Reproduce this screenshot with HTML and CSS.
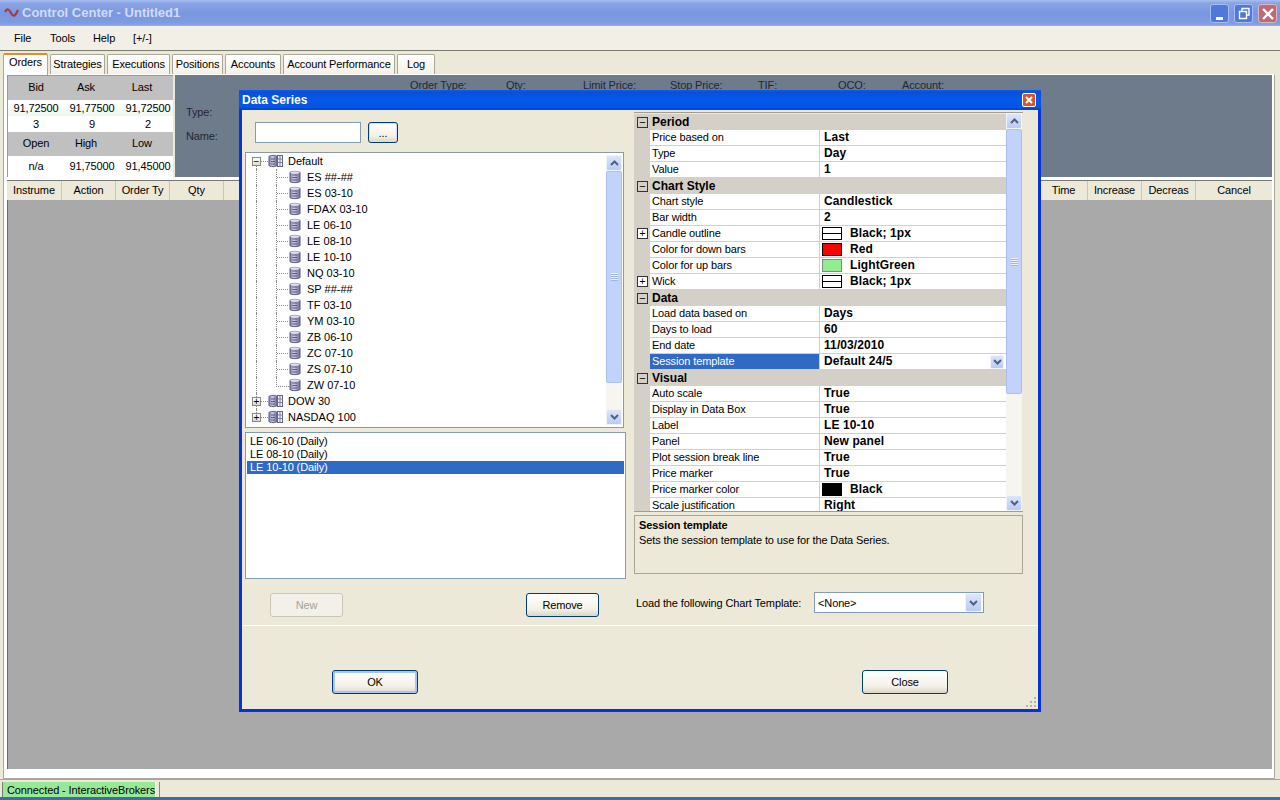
FILE: index.html
```html
<!DOCTYPE html>
<html lang="en">
<head>
<meta charset="utf-8">
<title>Control Center - Untitled1</title>
<link rel="stylesheet" href="styles.css">
</head>
<body>
<svg class="defs" width="0" height="0" aria-hidden="true">
  <defs>
    <linearGradient id="dbg" x1="0" x2="1" y1="0" y2="0"><stop offset="0" stop-color="#7676a8"/><stop offset=".4" stop-color="#cfcfe6"/><stop offset="1" stop-color="#6a6a9c"/></linearGradient>
    <symbol id="db" viewBox="0 0 12 14">
      <path d="M1 2.500C1 1 11 1 11 2.500V11.500C11 13 1 13 1 11.500Z" fill="url(#dbg)" stroke="#5c5c84"/>
      <path d="M3.500 5h5M3.500 7.500h5M3.500 10h5" stroke="#55557e"/>
      <ellipse cx="6" cy="2.500" rx="4.500" ry="1.200" fill="#dedeee"/>
    </symbol>
    <symbol id="dbs" viewBox="0 0 16 14">
      <path d="M1 2.500C1 1 9 1 9 2.500V11.500C9 13 1 13 1 11.500Z" fill="url(#dbg)" stroke="#5c5c84"/>
      <path d="M3 5h4M3 7.500h4M3 10h4" stroke="#55557e"/>
      <rect x="9.500" y="1.500" width="5" height="11" fill="#f4f4f8" stroke="#62627e"/>
      <path d="M9.500 5h5M9.500 8.500h5M12 1.500v11" stroke="#7c7c9a"/>
    </symbol>
    <symbol id="chev" viewBox="0 0 9 6"><path d="M1 5l3.500-3.500L8 5" fill="none" stroke="#4d6185" stroke-width="2"/></symbol>
  </defs>
</svg>
<div class="app">
  <header class="titlebar">
    <svg class="appicon" width="15" height="12" viewBox="0 0 15 12"><path d="M1 5c2-4 4-3 6 1s4 4 7-3" fill="none" stroke="#a83b3b" stroke-width="2.200"/></svg>
    <span class="apptitle">Control Center - Untitled1</span>
    <div class="winbtns">
      <span class="winbtn"><svg width="18" height="18" viewBox="0 0 18 18"><rect x="5" y="12" width="7" height="3" fill="#fff"/></svg></span>
      <span class="winbtn"><svg width="18" height="18" viewBox="0 0 18 18"><path d="M7 6V3.500h7V10h-2.500M4.500 6.500h7v7h-7z" fill="none" stroke="#fff" stroke-width="1.400"/></svg></span>
      <span class="winbtn winclose"><svg width="18" height="18" viewBox="0 0 18 18"><path d="M4 4l10 10M14 4L4 14" stroke="#fff" stroke-width="2.400"/></svg></span>
    </div>
  </header>
  <nav class="menubar"><span class="m1">File</span><span class="m2">Tools</span><span class="m3">Help</span><span>[+/-]</span></nav>
  <div class="tabs">
    <span class="tab active t1">Orders</span>
    <span class="tab t2">Strategies</span>
    <span class="tab t3">Executions</span>
    <span class="tab t4">Positions</span>
    <span class="tab t5">Accounts</span>
    <span class="tab t6">Account Performance</span>
    <span class="tab t7">Log</span>
  </div>
  <main class="panel">
    <section class="top">
      <div class="quote">
        <div class="qrow qhead"><span>Bid</span><span>Ask</span><span>Last</span></div>
        <div class="qrow qval qtint"><span>91,72500</span><span>91,77500</span><span>91,72500</span></div>
        <div class="qrow qval"><span>3</span><span>9</span><span>2</span></div>
        <div class="qrow qhead"><span>Open</span><span>High</span><span>Low</span></div>
        <div class="qrow qval qlast"><span>n/a</span><span>91,75000</span><span>91,45000</span></div>
      </div>
      <div class="slate">
        <div class="slabels"><span class="l1">Order Type:</span><span class="l2">Qty:</span><span class="l3">Limit Price:</span><span class="l4">Stop Price:</span><span class="l5">TIF:</span><span class="l6">OCO:</span><span>Account:</span></div>
        <div class="sfield first">Type:</div>
        <div class="sfield">Name:</div>
      </div>
    </section>
    <section class="grid">
      <div class="ghead">
        <span class="g1">Instrume</span><span class="g2">Action</span><span class="g3">Order Ty</span><span class="g4">Qty</span>
        <span class="gspace"></span>
        <span class="g5">Time</span><span class="g6">Increase</span><span class="g7">Decreas</span><span class="g8">Cancel</span>
      </div>
      <div class="gbody"></div>
    </section>
  </main>
  <footer class="status"><span class="conn">Connected - InteractiveBrokers</span><span class="srest"></span></footer>
  <div class="taskstrip"></div>

  <div class="dialog">
    <div class="dtitle"><span>Data Series</span><span class="dclose"><svg width="12" height="12" viewBox="0 0 12 12"><path d="M3 3l6 6M9 3l-6 6" stroke="#fff" stroke-width="2"/></svg></span></div>
    <div class="dmain">
      <div class="dleft">
        <div class="search"><span class="input"></span><span class="btn dots">...</span></div>
        <div class="tree">
          <div class="tnodes">
            <div class="node root"><span class="pm">−</span><svg class="ri"><use href="#dbs"/></svg>Default</div>
            <div class="node leaf"><svg class="li"><use href="#db"/></svg>ES ##-##</div>
            <div class="node leaf"><svg class="li"><use href="#db"/></svg>ES 03-10</div>
            <div class="node leaf"><svg class="li"><use href="#db"/></svg>FDAX 03-10</div>
            <div class="node leaf"><svg class="li"><use href="#db"/></svg>LE 06-10</div>
            <div class="node leaf"><svg class="li"><use href="#db"/></svg>LE 08-10</div>
            <div class="node leaf"><svg class="li"><use href="#db"/></svg>LE 10-10</div>
            <div class="node leaf"><svg class="li"><use href="#db"/></svg>NQ 03-10</div>
            <div class="node leaf"><svg class="li"><use href="#db"/></svg>SP ##-##</div>
            <div class="node leaf"><svg class="li"><use href="#db"/></svg>TF 03-10</div>
            <div class="node leaf"><svg class="li"><use href="#db"/></svg>YM 03-10</div>
            <div class="node leaf"><svg class="li"><use href="#db"/></svg>ZB 06-10</div>
            <div class="node leaf"><svg class="li"><use href="#db"/></svg>ZC 07-10</div>
            <div class="node leaf"><svg class="li"><use href="#db"/></svg>ZS 07-10</div>
            <div class="node leaf lastleaf"><svg class="li"><use href="#db"/></svg>ZW 07-10</div>
            <div class="node root"><span class="pm">+</span><svg class="ri"><use href="#dbs"/></svg>DOW 30</div>
            <div class="node root"><span class="pm">+</span><svg class="ri"><use href="#dbs"/></svg>NASDAQ 100</div>
          </div>
          <div class="scroll tscroll">
            <span class="sbtn"><svg width="9" height="6"><use href="#chev"/></svg></span>
            <span class="thumb tthumb"><i></i></span>
            <span class="track"></span>
            <span class="sbtn"><svg class="down" width="9" height="6"><use href="#chev"/></svg></span>
          </div>
        </div>
        <div class="list">
          <div>LE 06-10 (Daily)</div>
          <div>LE 08-10 (Daily)</div>
          <div class="sel">LE 10-10 (Daily)</div>
        </div>
        <div class="lbtns"><span class="btn new disabled">New</span><span class="btn new">Remove</span></div>
      </div>
      <div class="dright">
        <div class="props">
          <div class="prows">
            <div class="cat"><span class="ex">−</span>Period</div>
            <div class="pr"><span class="pg"></span><span class="pn">Price based on</span><span class="pv">Last</span></div>
            <div class="pr"><span class="pg"></span><span class="pn">Type</span><span class="pv">Day</span></div>
            <div class="pr"><span class="pg"></span><span class="pn">Value</span><span class="pv">1</span></div>
            <div class="cat"><span class="ex">−</span>Chart Style</div>
            <div class="pr"><span class="pg"></span><span class="pn">Chart style</span><span class="pv">Candlestick</span></div>
            <div class="pr"><span class="pg"></span><span class="pn">Bar width</span><span class="pv">2</span></div>
            <div class="pr"><span class="pg"><span class="ex">+</span></span><span class="pn">Candle outline</span><span class="pv"><i class="sw swline"></i>Black; 1px</span></div>
            <div class="pr"><span class="pg"></span><span class="pn">Color for down bars</span><span class="pv"><i class="sw swred"></i>Red</span></div>
            <div class="pr"><span class="pg"></span><span class="pn">Color for up bars</span><span class="pv"><i class="sw swgreen"></i>LightGreen</span></div>
            <div class="pr"><span class="pg"><span class="ex">+</span></span><span class="pn">Wick</span><span class="pv"><i class="sw swline"></i>Black; 1px</span></div>
            <div class="cat"><span class="ex">−</span>Data</div>
            <div class="pr"><span class="pg"></span><span class="pn">Load data based on</span><span class="pv">Days</span></div>
            <div class="pr"><span class="pg"></span><span class="pn">Days to load</span><span class="pv">60</span></div>
            <div class="pr"><span class="pg"></span><span class="pn">End date</span><span class="pv">11/03/2010</span></div>
            <div class="pr"><span class="pg"></span><span class="pn psel">Session template</span><span class="pv">Default 24/5<span class="dd small"><svg class="down" width="9" height="6"><use href="#chev"/></svg></span></span></div>
            <div class="cat"><span class="ex">−</span>Visual</div>
            <div class="pr"><span class="pg"></span><span class="pn">Auto scale</span><span class="pv">True</span></div>
            <div class="pr"><span class="pg"></span><span class="pn">Display in Data Box</span><span class="pv">True</span></div>
            <div class="pr"><span class="pg"></span><span class="pn">Label</span><span class="pv">LE 10-10</span></div>
            <div class="pr"><span class="pg"></span><span class="pn">Panel</span><span class="pv">New panel</span></div>
            <div class="pr"><span class="pg"></span><span class="pn">Plot session break line</span><span class="pv">True</span></div>
            <div class="pr"><span class="pg"></span><span class="pn">Price marker</span><span class="pv">True</span></div>
            <div class="pr"><span class="pg"></span><span class="pn">Price marker color</span><span class="pv"><i class="sw swblack"></i>Black</span></div>
            <div class="pr"><span class="pg"></span><span class="pn">Scale justification</span><span class="pv">Right</span></div>
          </div>
          <div class="scroll pscroll">
            <span class="sbtn"><svg width="9" height="6"><use href="#chev"/></svg></span>
            <span class="thumb pthumb"><i></i></span>
            <span class="track"></span>
            <span class="sbtn"><svg class="down" width="9" height="6"><use href="#chev"/></svg></span>
          </div>
        </div>
        <div class="help"><b>Session template</b><span>Sets the session template to use for the Data Series.</span></div>
        <div class="template">
          <span class="tlabel">Load the following Chart Template:</span>
          <span class="select"><span>&lt;None&gt;</span><span class="dd"><svg class="down" width="9" height="6"><use href="#chev"/></svg></span></span>
        </div>
      </div>
    </div>
    <div class="dfoot"><span class="btn act def">OK</span><span class="btn act">Close</span>
      <svg class="grip" width="12" height="12" viewBox="0 0 12 12"><path d="M9 1h2v2H9zM5 5h2v2H5zM9 5h2v2H9zM1 9h2v2H1zM5 9h2v2H5zM9 9h2v2H9z" fill="#b7b49f"/></svg>
    </div>
  </div>
</div>
</body>
</html>
```
FILE: styles.css
```css
* { box-sizing: border-box; }
html, body { margin: 0; padding: 0; }
body { width: 1280px; height: 800px; overflow: hidden; font: 11px/16px "Liberation Sans", Arial, sans-serif; letter-spacing: -.12px; color: #000; background: #ece9d8; }
.defs { position: absolute; }
svg { display: block; }
.down { transform: scaleY(-1); }
.app { position: relative; width: 1280px; height: 800px; display: flex; flex-direction: column; }

.titlebar { height: 26px; display: flex; align-items: center; padding: 0 3px 0 4px; background: linear-gradient(#a9bff0 0, #8aa4e6 3px, #7a96df 14px, #7f9ce2 23px, #93ade9 26px); }
.appicon { margin-right: 3px; }
.apptitle { font: bold 13px/20px "Liberation Sans", sans-serif; letter-spacing: 0; color: #d0dcf6; }
.winbtns { margin-left: auto; display: flex; gap: 5px; }
.winbtn { width: 19px; height: 19px; border: 1px solid #a8bdf0; border-radius: 3px; background: #4f78da; }
.winclose { background: #bd6a72; border-color: #d8b8c4; }

.menubar { height: 25px; display: flex; align-items: center; background: #f2efe7; border-bottom: 1px solid #7c7b70; padding-left: 14px; flex: none; }
.m1 { width: 36px; } .m2 { width: 43px; } .m3 { width: 40px; }

.tabs { height: 23px; display: flex; align-items: flex-end; padding-left: 3px; background: #ece9d8; gap: 2px; position: relative; z-index: 1; flex: none; }
.tab { height: 20px; line-height: 19px; text-align: center; background: linear-gradient(#fff, #f3f1e7); border: 1px solid #a9a797; border-bottom: 0; border-radius: 2px 2px 0 0; }
.active { height: 22px; margin-bottom: -1px; background: #fff; border-top: 2px solid #e68b2c; line-height: 15px; }
.t1 { width: 45px; } .t2 { width: 55px; } .t3 { width: 63px; } .t4 { width: 51px; }
.t5 { width: 56px; } .t6 { width: 112px; } .t7 { width: 38px; }

.panel { width: 1272px; margin-left: 3px; height: 705px; border: 1px solid #a9a797; border-top-color: #fff; background: #fff; padding: 0 2px 0 3px; display: flex; flex-direction: column; flex: none; }
.top { height: 102px; display: flex; gap: 2px; background: #ece9d8; flex: none; }
.quote { width: 166px; background: #fff; border: 1px solid #999; border-width: 1px 0 0 1px; flex: none; }
.qrow { display: grid; grid-template-columns: 56px 56px 52px; text-align: center; height: 16px; line-height: 16px; }
.qhead { height: 24px; line-height: 23px; background: #c0c0c0; }
.qhead span + span { padding-right: 12px; }
.qhead span + span + span { padding-right: 8px; }
.qval span + span + span { padding-left: 4px; white-space: nowrap; }
.qtint { background: linear-gradient(#fff, #eef8ee); }
.qlast { height: 21px; line-height: 20px; }
.slate { flex: 1; background: #6d7b8b; color: #1f2733; overflow: hidden; }
.slabels { display: flex; padding: 2px 0 0 235px; height: 19px; }
.l1 { width: 96px; } .l2 { width: 77px; } .l3 { width: 87px; } .l4 { width: 88px; } .l5 { width: 80px; } .l6 { width: 64px; }
.sfield { padding-left: 11px; height: 24px; line-height: 24px; }
.first { margin-top: 6px; }

.grid { flex: 1; margin-top: 3px; display: flex; flex-direction: column; background: #fff; }
.ghead { height: 20px; display: flex; background: #ece9d8; border-top: 1px solid #777; line-height: 18px; flex: none; }
.ghead span { text-align: center; border-right: 1px solid #c9c6b4; }
.g1 { width: 55px; } .g2 { width: 54px; } .g3 { width: 54px; } .g4 { width: 54px; }
.ghead .gspace { flex: 1; border: 0; }
.g5 { width: 48px; } .g6 { width: 54px; } .g7 { width: 54px; } .g8 { width: 76px; }
.ghead .g8 { border-right: 0; }
.gbody { height: 569px; background: #a9a9a9; border-left: 1px solid #6c6c64; flex: none; }

.status { height: 18px; display: flex; padding: 2px 0 0 2px; gap: 3px; background: #ece9d8; border-top: 1px solid #a9a797; flex: none; }
.conn { width: 154px; height: 15px; line-height: 16px; padding-left: 4px; background: #98e898; border-left: 1px solid #7c7b70; border-right: 1px solid #fff; white-space: nowrap; }
.srest { flex: 1; border-left: 1px solid #8a8876; margin-right: 2px; }
.taskstrip { height: 3px; flex: none; background: #3a6ea5; }

.dialog { position: absolute; left: 239px; top: 90px; width: 802px; height: 622px; border: 3px solid #0831d9; border-top: 0; background: #ece9d8; display: flex; flex-direction: column; }
.dtitle { height: 20px; margin: 0 -3px; padding: 0 5px 0 3px; display: flex; align-items: center; justify-content: space-between; color: #fff; font: bold 12px/21px "Liberation Sans", sans-serif; letter-spacing: 0; background: linear-gradient(#0a5fe8 0, #0a4fd8 2px, #0658ea 9px, #0255e6 17px, #0440c0 20px); flex: none; }
.dclose { width: 14px; height: 14px; border: 1px solid #fff; border-radius: 2px; background: #d3582f; }
.dmain { height: 516px; display: flex; border-bottom: 1px solid #fff; flex: none; }
.dleft { width: 392px; padding-left: 3px; flex: none; }
.search { display: flex; gap: 7px; margin: 12px 0 0 10px; height: 21px; }
.input { width: 106px; height: 21px; background: #fff; border: 1px solid #7f9db9; }
.btn { display: block; text-align: center; background: linear-gradient(#fff, #f3f1e7 70%, #d9d6c7); border: 1px solid #003c74; border-radius: 3px; }
.dots { width: 30px; height: 21px; line-height: 20px; box-shadow: inset 0 0 0 1px #cfe0f6; }

.tree { width: 379px; height: 276px; margin-top: 9px; display: flex; background: #fff; border: 1px solid #8a9aa8; overflow: hidden; }
.tnodes { flex: 1; }
.node { height: 16px; line-height: 16px; display: flex; align-items: center; position: relative; white-space: nowrap; letter-spacing: 0; }
.root { padding-left: 6px; }
.root::before { content: ""; position: absolute; left: 15px; top: 8px; width: 7px; border-top: 1px dotted #8a8a8a; }
.root::after { content: ""; position: absolute; left: 10px; top: 0; height: 16px; border-left: 1px dotted #8a8a8a; }
.root:first-child::after { top: 8px; height: 8px; }
.root:last-child::after { height: 8px; }
.leaf { padding-left: 43px; }
.leaf::before { content: ""; position: absolute; left: 30px; top: 0; width: 12px; height: 9px; border-left: 1px dotted #8a8a8a; border-bottom: 1px dotted #8a8a8a; }
.leaf:not(.lastleaf)::before { height: 16px; border-bottom: 0; background: repeating-linear-gradient(90deg, #8a8a8a 0 1px, transparent 1px 2px) 0 8px / 12px 1px no-repeat; }
.leaf::after { content: ""; position: absolute; left: 10px; top: 0; height: 16px; border-left: 1px dotted #8a8a8a; }
.pm { width: 9px; height: 9px; line-height: 7px; font-size: 10px; text-align: center; border: 1px solid #8a8a7c; background: linear-gradient(#fff, #dcdcd0); position: relative; z-index: 1; margin-right: 7px; }
.ri { width: 16px; height: 14px; margin-right: 4px; background: #fff; position: relative; z-index: 1; }
.li { width: 12px; height: 14px; margin-right: 6px; }

.scroll { width: 16px; flex: none; display: flex; flex-direction: column; align-items: center; background: #f6f5ef; }
.tscroll { margin: 2px 1px 2px 0; }
.sbtn { height: 16px; width: 16px; flex: none; display: flex; align-items: center; justify-content: center; background: linear-gradient(#dce6fc, #b9cbf5); border: 1px solid #eef3fe; border-radius: 2px; }
.thumb { width: 16px; display: flex; align-items: center; justify-content: center; background: #c1d3fb; border: 1px solid #aac0ef; border-radius: 2px; flex: none; }
.thumb i { width: 7px; height: 8px; background: repeating-linear-gradient(#eef3fe 0 1px, #9db4e4 1px 2px); }
.tthumb { height: 212px; }
.track { flex: 1; }
.pthumb { height: 265px; }
.pscroll { margin: 0 1px 0 0; }

.list { width: 381px; height: 147px; margin-top: 4px; background: #fff; border: 1px solid #7f9db9; padding: 2px 1px; line-height: 13px; }
.sel { background: #316ac5; color: #fff; padding-left: 3px; }
.list div:not(.sel) { padding-left: 3px; }
.lbtns { display: flex; gap: 183px; margin: 14px 0 0 25px; }
.new { width: 73px; height: 24px; line-height: 23px; }
.disabled { color: #a6a496; border-color: #c9c7ba; background: #f2f0e8; }

.dright { flex: 1; padding-top: 2px; }
.props { width: 389px; height: 400px; display: flex; background: #ece9d8; border: 1px solid #9e9e92; border-width: 1px 0 1px 0; overflow: hidden; }
.prows { width: 372px; padding-top: 1px; flex: none; }
.cat { height: 16px; line-height: 16px; font-size: 12px; letter-spacing: 0; background: #d4d0c8; font-weight: bold; padding-left: 3px; display: flex; align-items: center; }
.ex { width: 11px; height: 11px; font: 11px/8px "Liberation Sans", sans-serif; text-align: center; border: 1px solid #333; margin-right: 4px; flex: none; }
.pr { height: 16px; display: flex; line-height: 15px; white-space: nowrap; }
.pg { width: 16px; background: #d4d0c8; padding: 2px 0 0 3px; flex: none; }
.pg .ex { display: block; background: #fff; margin: 0; }
.pn { width: 170px; padding-left: 2px; background: #fff; border-bottom: 1px solid #d4d0c8; border-right: 1px solid #d4d0c8; flex: none; }
.psel { background: #316ac5; color: #fff; }
.pv { flex: 1; font-size: 12px; font-weight: bold; padding-left: 4px; background: #fff; border-bottom: 1px solid #d4d0c8; display: flex; align-items: center; position: relative; letter-spacing: .1px; }
.sw { width: 20px; height: 13px; margin: 0 8px 0 -2px; border: 1px solid #000; flex: none; }
.swline { background: linear-gradient(#000, #000) 0 5px / 100% 1px no-repeat #fff; }
.swred { background: #f00; }
.swgreen { background: #90ee90; border-color: #7d8f7d; }
.swblack { background: #000; }
.dd { margin-left: auto; width: 17px; height: 19px; display: flex; align-items: center; justify-content: center; background: linear-gradient(#dce6fc, #b9cbf5); border: 1px solid #eef3fe; border-radius: 2px; flex: none; }
.small { width: 14px; height: 14px; margin-right: 2px; }

.help { width: 389px; height: 59px; margin-top: 3px; border: 1px solid #a8a695; padding: 2px 4px; line-height: 15px; }
.help b, .help span { display: block; }
.template { display: flex; align-items: center; margin-top: 18px; padding-left: 2px; height: 21px; }
.tlabel { width: 178px; flex: none; white-space: nowrap; }
.select { width: 170px; height: 21px; background: #fff; border: 1px solid #7f9db9; display: flex; align-items: center; padding: 0 1px 0 3px; }

.dfoot { flex: 1; position: relative; padding: 44px 0 0 90px; display: flex; gap: 444px; align-items: flex-start; }
.act { width: 86px; height: 24px; line-height: 23px; }
.def { box-shadow: inset 0 0 0 2px #a9c4ee; }
.grip { position: absolute; right: 1px; bottom: 1px; }
```
